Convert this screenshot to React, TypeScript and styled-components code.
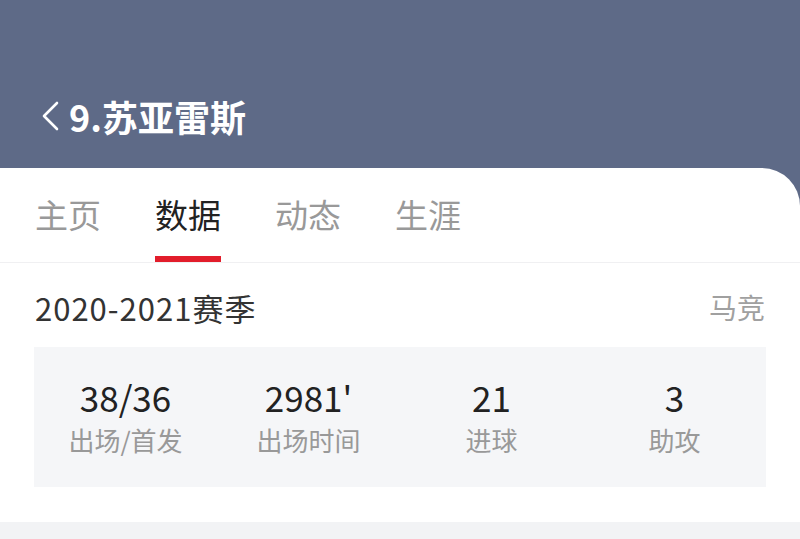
import React from 'react'
import styled, { createGlobalStyle } from 'styled-components'

const GlobalStyle = createGlobalStyle`
  html, body {
    margin: 0;
    padding: 0;
    background: #5e6a87;
    font-family: "Noto Sans CJK SC", "Noto Sans", sans-serif;
  }
`

const stats = [
  { value: '38/36', label: '出场/首发' },
  { value: "2981'", label: '出场时间' },
  { value: '21', label: '进球' },
  { value: '3', label: '助攻' },
]

const tabs = ['主页', '数据', '动态', '生涯']

const Page = styled.div`
  width: 800px;
  height: 539px;
  overflow: hidden;
  display: flex;
  flex-direction: column;
  background: #5e6a87;
`

const Header = styled.header`
  height: 168px;
  flex-shrink: 0;
  display: flex;
  align-items: flex-start;
  padding: 90px 0 0 38px;
  box-sizing: border-box;
  color: #fff;
`

const Title = styled.h1`
  margin: 0;
  display: flex;
  align-items: center;
  gap: 7px;
  font-size: 36px;
  font-weight: 700;
  line-height: 52px;
`

const Card = styled.main`
  flex: 1;
  background: #fff;
  border-top-right-radius: 38px;
  display: flex;
  flex-direction: column;
`

const TabBar = styled.nav`
  height: 95px;
  display: flex;
  gap: 54px;
  padding-left: 35px;
  border-bottom: 1px solid #f0f0f2;
  box-sizing: border-box;
`

const Tab = styled.div<{ $active?: boolean }>`
  position: relative;
  padding-top: 23px;
  font-size: 33px;
  line-height: 46px;
  color: ${(p) => (p.$active ? '#222' : '#999')};

  &::after {
    content: '';
    display: ${(p) => (p.$active ? 'block' : 'none')};
    position: absolute;
    left: 0;
    right: 0;
    bottom: 0;
    height: 6px;
    background: #e21d2b;
  }
`

const Section = styled.section`
  padding: 0 34px;
  flex: 1;
`

const SeasonRow = styled.div`
  display: flex;
  justify-content: space-between;
  align-items: center;
  height: 84px;
  padding: 4px 1px 0;
  box-sizing: border-box;
`

const Season = styled.span`
  font-size: 31px;
  letter-spacing: 1px;
  color: #333;
`

const Club = styled.span`
  font-size: 28px;
  color: #a0a0a0;
`

const StatsBox = styled.div`
  height: 140px;
  background: #f5f6f8;
  display: grid;
  grid-template-columns: repeat(4, 1fr);
  align-items: start;
  padding-top: 26px;
  box-sizing: border-box;
`

const Stat = styled.div`
  display: flex;
  flex-direction: column;
  align-items: center;
`

const Value = styled.div`
  font-size: 35px;
  line-height: 48px;
  color: #222;
`

const Label = styled.div`
  font-size: 26px;
  line-height: 38px;
  color: #999;
`

const Footer = styled.div`
  height: 17px;
  background: #f2f3f5;
`

const Back = () => (
  <svg width="24" height="34" viewBox="0 0 24 34" fill="none">
    <path d="M19 4 L6 17 L19 30" stroke="#fff" strokeWidth="2.6" strokeLinecap="round" strokeLinejoin="round" />
  </svg>
)

export default function App() {
  return (
    <Page>
      <GlobalStyle />
      <Header>
        <Title>
          <Back />
          9.苏亚雷斯
        </Title>
      </Header>
      <Card>
        <TabBar>
          {tabs.map((t) => (
            <Tab key={t} $active={t === '数据'}>
              {t}
            </Tab>
          ))}
        </TabBar>
        <Section>
          <SeasonRow>
            <Season>2020-2021赛季</Season>
            <Club>马竞</Club>
          </SeasonRow>
          <StatsBox>
            {stats.map((s) => (
              <Stat key={s.label}>
                <Value>{s.value}</Value>
                <Label>{s.label}</Label>
              </Stat>
            ))}
          </StatsBox>
        </Section>
        <Footer />
      </Card>
    </Page>
  )
}
